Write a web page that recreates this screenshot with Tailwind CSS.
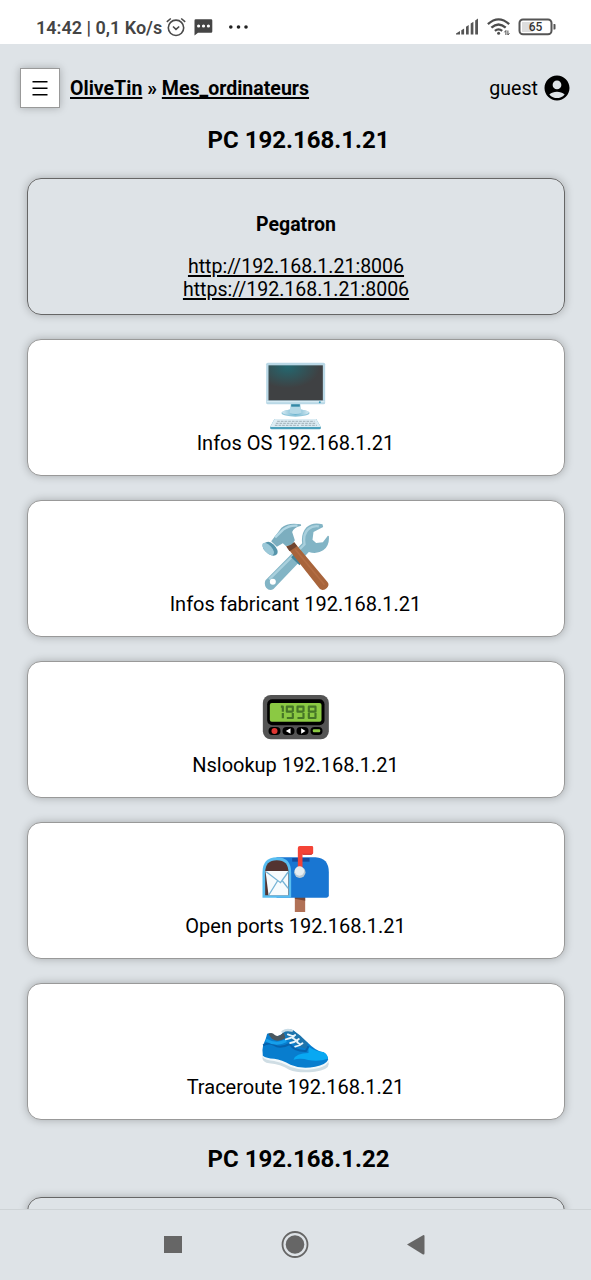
<!DOCTYPE html>
<html lang="fr">
<head>
<meta charset="utf-8">
<title>OliveTin</title>
<script src="https://cdn.jsdelivr.net/npm/@tailwindcss/browser@4"></script>
</head>
<body class="flex h-[1280px] w-[591px] flex-col overflow-hidden bg-[#dee3e7] font-['Roboto',sans-serif] text-black">
<div class="flex h-11 shrink-0 items-center bg-white pt-2.5 pl-9 text-[#444]">
  <span class="w-[130px] text-[18px] font-semibold whitespace-nowrap">14:42 | 0,1 Ko/s</span>
  <svg class="h-5 w-5" viewBox="0 0 20 20" fill="none" stroke="#4a4a4a" stroke-width="1.6"><circle cx="10" cy="10.8" r="7.7"/><path d="M.8 4.8 4.8 1.5M15.2 1.5l4 3.3M7 9.5l3 2.8 3.2-2.8"/></svg>
  <svg class="ml-2 h-5 w-5" viewBox="0 0 20 20"><path d="M.5 3.5Q.5 2.3 1.800 2.3h15.300q1.200 0 1.200 1.200v11q0 1.200-1.200 1.200H4L.5 18.500z" fill="#454545"/><path d="M4.600 9h.01M9.500 9h.01M14.400 9h.01" stroke="#fff" stroke-width="3.200" stroke-linecap="round"/></svg>
  <svg class="ml-3.5 h-5 w-6" viewBox="0 0 24 20"><g fill="#222"><circle cx="2.800" cy="10" r="1.800"/><circle cx="10.500" cy="10" r="1.800"/><circle cx="18" cy="10" r="1.800"/></g></svg>
  <svg class="ml-auto h-5 w-[24px]" viewBox="0 0 24 20"><path d="M0 17.5v-1l4-2.5v3.5zM5.3 17.5v-4.3l2.8-1.8v6.1zM10 17.5V9.8L12.7 8v9.5zM14.7 17.5V6.6l2.7-1.8v12.7zM19.2 17.5V3.5L22 1.5v16z" fill="#555"/></svg>
  <svg class="ml-[7px] h-5 w-[24px]" viewBox="0 0 24 20" fill="none" stroke="#4d4d4d" stroke-width="2.3"><path d="M.9 7.2Q11.5-2.4 22.2 7.2M4.4 10.7q7.1-6.5 14.3 0M7.9 13.9q3.6-3 7.3 0"/><circle cx="11.6" cy="16.3" r="1.5" fill="#4d4d4d" stroke="none"/><path d="M18.900 13.500v4.500M20.900 13.500v4.500M17.400 15.300l1.500-1.800M22.400 16.200l-1.500 1.800" stroke-width="1"/></svg>
  <svg class="mr-[34px] ml-[7px] h-5 w-[39px]" viewBox="0 0 39 20"><rect x="1.5" y="2.5" width="32" height="14.7" rx="3.5" fill="#fff" stroke="#555" stroke-width="2"/><path d="M4 5h11v10H4z" fill="#ddd"/><path d="M35.5 7h1.2q.8 0 .8.8v4q0 .8-.8.8h-1.2z" fill="#555"/><text x="17.5" y="14.3" text-anchor="middle" font-size="12" font-weight="500" fill="#333">65</text></svg>
</div>
<header class="flex h-[88px] shrink-0 items-center pr-5 pl-5 text-[19.6px] leading-6">
  <button class="flex h-10 w-10 items-center justify-center border border-[#999] bg-white shadow-[0_0_8px_rgba(0,0,0,0.25)]"><svg class="h-5 w-5" viewBox="0 0 20 20"><path d="M2.500 3.700h15M2.500 10.300h15M2.500 16.800h15" stroke="#000" stroke-width="1.600"/></svg></button>
  <nav class="ml-2.5 pt-px text-[19.55px] font-bold whitespace-nowrap"><a class="underline decoration-[1.5px] underline-offset-2">OliveTin</a> » <a class="underline decoration-[1.5px] underline-offset-2">Mes_ordinateurs</a></nav>
  <span class="ml-auto pt-0.5">guest</span>
  <svg class="-mr-px ml-1 h-[30px] w-[30px]" viewBox="0 0 24 24"><path d="M12 2C6.480 2 2 6.480 2 12s4.480 10 10 10 10-4.480 10-10S17.520 2 12 2zm0 4c1.930 0 3.500 1.570 3.500 3.500S13.930 13 12 13s-3.500-1.570-3.500-3.500S10.070 6 12 6zm0 14c-2.030 0-4.430-.820-6.140-2.880C7.550 15.800 9.680 15 12 15s4.450.800 6.140 2.120C16.430 19.180 14.030 20 12 20z"/></svg>
</header>
<main class="-mt-3 min-h-0 flex-1 overflow-hidden pr-[26px] pl-[27px] text-center text-[20px] leading-6">
  <h2 class="flex h-[58px] items-start justify-center pt-1 pl-[5px] text-[24px] leading-8 font-bold">PC 192.168.1.21</h2>
  <section class="grid gap-6">
    <article class="h-[137px] rounded-[14px] border border-[#666] pt-[33px] shadow-[0_0_9px_rgba(0,0,0,0.25)]">
      <h3 class="pt-px text-[19.5px] leading-6 font-bold">Pegatron</h3>
      <p class="mt-[18px] text-[19.55px] leading-[23px]"><a class="underline decoration-[1.5px] underline-offset-2">http://192.168.1.21:8006</a><br><a class="underline decoration-[1.5px] underline-offset-2">https://192.168.1.21:8006</a></p>
    </article>
    <button class="flex h-[137px] flex-col items-center rounded-[14px] border border-[#999] bg-white pt-[21px] pr-px shadow-[0_0_9px_rgba(0,0,0,0.25)]">
      <svg class="h-[70px] w-[110px] shrink-0" viewBox="3.500 33 330 210">
        <defs><radialGradient id="scr" cx=".35" cy=".05" r=".6"><stop offset="0" stop-color="#24676f"/><stop offset="1" stop-color="#3f4143"/></radialGradient><linearGradient id="std"><stop offset="0" stop-color="#d5e9f2"/><stop offset=".5" stop-color="#6eb5cf"/><stop offset="1" stop-color="#d5e9f2"/></linearGradient></defs>
        <ellipse cx="167" cy="189" rx="42" ry="11" fill="#8fc5d9"/><ellipse cx="167" cy="187" rx="40" ry="9" fill="url(#std)"/>
        <path d="M153 158h28l4 30q-18 8-36 0z" fill="#b4d9e7"/><path d="M154 160h26v10h-26z" fill="#3388a5"/>
        <rect x="79" y="38" width="177" height="125" rx="5" fill="#b9d8e6"/><rect x="86" y="46" width="163" height="105" fill="url(#scr)"/>
        <path d="M81 155h173" stroke="#d6eaf3" stroke-width="4"/><circle cx="240" cy="157" r="3" fill="#3c9cba"/>
        <path d="M104 207h125l14 24v4q0 3-4 3H95q-4 0-4-3v-4z" fill="#4ba0bb"/><path d="M104 207h125l14 24H91z" fill="#dcecf3"/>
        <path d="M112 214h112M108 220h119M105 226h72M184 226h47" stroke="#aabac2" stroke-width="4" stroke-dasharray="8 3"/>
      </svg>
      <span>Infos OS 192.168.1.21</span>
    </button>
    <button class="flex h-[137px] flex-col items-center rounded-[14px] border border-[#999] bg-white pt-[21px] pr-px shadow-[0_0_9px_rgba(0,0,0,0.25)]">
      <svg class="h-[70px] w-[110px] shrink-0" viewBox="3.500 35 330 210">
        <path d="M77 210 187 99Q183 70 200 51q18-17 48-9l2 8-29 15-3 23 11 10 20-2 15-20 3 1q3 29-17 43-19 13-43 5L101 236q-12 8-22-4-7-11-2-22z" fill="#82b4c5"/>
        <path d="M88 207 194 102q-5-32 12-46 13-11 31-8" fill="none" stroke="#a9d0dd" stroke-width="7"/>
        <path d="m154 141 14-15 25 23-14 16z" fill="#418297"/>
        <circle cx="99" cy="214" r="9" fill="#fff"/>
        <path d="m139 108 24-12 100 119q7 9-2 18-9 9-19 4-3-1-6-6z" fill="#a8643b"/><path d="m140 109 23-13 9 12-23 15z" fill="#70442f"/><path d="m166 117 88 106" stroke="#b36d44" stroke-width="5"/>
        <path d="M94 93 125 52q20-17 58-10l1 4q-23 5-27 19l8 25q-9 18-27 17l-9-8-18 10z" fill="#7caebf"/>
        <path d="M106 81 130 58q18-14 43-12" fill="none" stroke="#b2d7e4" stroke-width="7"/>
        <path d="M79 96q9-6 23 7 16 17 10 28-9 11-26 0-22-16-17-30z" fill="#5695ab"/><ellipse cx="85" cy="116" rx="11" ry="23" transform="rotate(-43 85 116)" fill="#9bc8d8"/>
      </svg>
      <span>Infos fabricant 192.168.1.21</span>
    </button>
    <button class="flex h-[137px] flex-col items-center rounded-[14px] border border-[#999] bg-white pt-[21px] pr-px shadow-[0_0_9px_rgba(0,0,0,0.25)]">
      <svg class="h-[70px] w-[110px] shrink-0" viewBox="3.500 9 330 210">
        <rect x="69" y="45" width="198" height="133" rx="24" fill="#545454"/><rect x="82" y="58" width="172" height="78" rx="15"/><rect x="90" y="69" width="155" height="56" rx="6" fill="#8bc943"/>
        <g fill="none" stroke="#467527" stroke-width="6.500" stroke-linejoin="round"><path d="M123 80h6v15M129 99v16M159 95h-18V80h18v15M159 99v15h-18M191 95h-18V80h18v15M191 99v15h-18M207 95V80h20v15zM207 99v15h20V99"/></g>
        <rect x="86" y="141" width="36" height="24" rx="12"/><rect x="128" y="141" width="36" height="24" rx="12"/><rect x="170" y="141" width="36" height="24" rx="12"/><rect x="212" y="141" width="36" height="24" rx="12"/>
        <circle cx="104" cy="153" r="9" fill="#df3632"/><path d="m138 153 14-8v16zM197 153l-13-8v16z" fill="#fff"/><rect x="219" y="148" width="22" height="9" rx="3" fill="#8bc943"/>
      </svg>
      <span>Nslookup 192.168.1.21</span>
    </button>
    <button class="flex h-[137px] flex-col items-center rounded-[14px] border border-[#999] bg-white pt-[21px] pr-px shadow-[0_0_9px_rgba(0,0,0,0.25)]">
      <svg class="h-[70px] w-[110px] shrink-0" viewBox="3.500 27 330 210">
        <path d="M165 182h31v49h-31z" fill="#b17156"/><path d="M165 182h31v15l-31-6z" fill="#784735"/>
        <path d="M110 67h117q40 2 40 45v69q0 7-7 7H110z" fill="#1976d2"/>
        <path d="M68 188v-75q0-46 43-46t43 46v75z" fill="#58bdf0"/><path d="M76 181v-68q0-37 35-37t35 37v68z" fill="#533431"/>
        <path d="M77 108 145 108v73H86z" fill="#f7fbfd"/><path d="m79 110 43 33 23-32M87 180l26-42M145 160l-17-22" fill="none" stroke="#76b4d6" stroke-width="4"/>
        <path d="M157 69h52v11h-52z" fill="#144b9e"/><path d="M174 103V39q0-6 6-6h36q4 0 4 4v17q0 4-4 4h-28v45z" fill="#f44336"/><path d="M188 58h28" stroke="#c62828" stroke-width="3"/>
        <circle cx="180" cy="112" r="17" fill="#bac9d2"/><circle cx="179" cy="108" r="14" fill="#e6eef2"/>
      </svg>
      <span>Open ports 192.168.1.21</span>
    </button>
    <button class="flex h-[137px] flex-col items-center rounded-[14px] border border-[#999] bg-white pt-[21px] pr-px shadow-[0_0_9px_rgba(0,0,0,0.25)]">
      <svg class="h-[70px] w-[110px] shrink-0" viewBox="3.500 -30 330 210">
        <path d="M69 117 68 131q1 10 20 14 34 3 60 19 30 12 77 6 41-5 42-23l-3-13z" fill="#cfdde4"/><path d="M69 117v10q9 10 34 11 24 4 50 18 32 12 70 6 32-4 42-20v-12z" fill="#f2f8fb"/>
        <path d="M82 56q-3 14-12 34-4 15-1 32 10 8 34 9 23 3 49 18 32 14 74 6 32-6 39-21-1-14-15-22-24-6-46-29l-42-35q-10-8-22-4l-15 14q-18 12-29-1-7-4-14-1z" fill="#087dce"/>
        <path d="M85 57q11-8 20 3 13 8 27-8l5 18q-24 14-41 1z" fill="#4a5860"/>
        <path d="M206 95q25 16 45 16 13 7 13 20-27 10-59 4-22-7-44-1 7-20 45-20z" fill="#08a8f2"/>
        <path d="M70 91q16-11 33-1 17 12 47-3 13 22 48 21l8-14" fill="none" stroke="#0762ad" stroke-width="6"/><path d="M78 75q31 18 61 2" fill="none" stroke="#159feb" stroke-width="9"/>
        <path d="m128 51 14-9 18 4 22 16 22 22-5 17-25-7-26-23z" fill="#1e75ad"/>
        <path d="M128 50q12-8 28-3" fill="none" stroke="#c9dce6" stroke-width="7" stroke-linecap="round"/>
        <path d="M138 73q14-2 28-13M151 84q14-2 26-12M166 95q12-2 22-10M144 58l18 7M158 69l15 9M172 82l10 7" fill="none" stroke="#e9f5fb" stroke-width="5.500" stroke-linecap="round"/>
      </svg>
      <span>Traceroute 192.168.1.21</span>
    </button>
  </section>
  <h2 class="flex h-[77px] items-center justify-center pl-[5px] text-[24px] font-bold">PC 192.168.1.22</h2>
  <article class="h-[137px] rounded-[14px] border border-[#666] shadow-[0_0_9px_rgba(0,0,0,0.25)]"></article>
</main>
<footer class="flex h-[71px] shrink-0 justify-center border-t border-[#ced3d6] bg-[#dee3e7]">
  <svg class="h-[70px] w-[591px]" viewBox="0 1210 591 70" fill="#666"><rect x="164" y="1236" width="18" height="17"/><circle cx="295" cy="1244.500" r="12.500" fill="none" stroke="#666" stroke-width="1.800"/><circle cx="295" cy="1244.500" r="9.300"/><path d="m407 1244.500 16.500-9.500q1 0 1 1v17q0 2-1.500 1.500z"/></svg>
</footer>
</body>
</html>
